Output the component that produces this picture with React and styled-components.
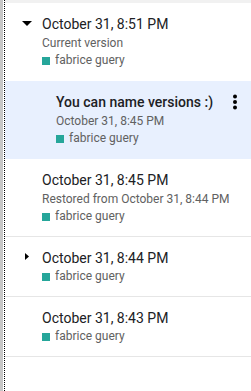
import React from 'react';
import styled, { createGlobalStyle } from 'styled-components';

const GlobalStyles = createGlobalStyle`
  html, body {
    margin: 0;
    padding: 0;
    background: #fff;
    font-family: Roboto, "Liberation Sans", Arial, sans-serif;
  }
`;

const Frame = styled.div`
  display: flex;
  height: 391px;
  border-left: 3px solid #c6c6c6;
  padding-left: 1px;
  box-sizing: border-box;
`;

const Panel = styled.div`
  flex: 1;
  border-left: 1px dotted #000;
  display: flex;
  flex-direction: column;
`;

const TopStrip = styled.div`
  height: 3px;
  background: #f1f1f1;
`;

const Item = styled.div`
  display: flex;
  align-items: flex-start;
  padding: 11px 4px 11px ${p => 10 + p.$level * 14}px;
  background: ${p => (p.$selected ? '#e8f0fe' : '#fff')};
  border-bottom: 1px solid ${p => (p.$divider ? '#e6e6e6' : 'transparent')};
`;

const Toggle = styled.div`
  width: 24px;
  height: 20px;
  flex: none;
  margin-right: 3px;
`;

const Body = styled.div`
  flex: 1;
  min-width: 0;
`;

const Title = styled.div`
  font-size: 14px;
  line-height: 20px;
  color: #202124;
  font-weight: ${p => (p.$named ? 500 : 400)};
  white-space: nowrap;
`;

const Sub = styled.div`
  font-size: 12px;
  line-height: 18px;
  color: #616161;
  white-space: nowrap;
`;

const Author = styled.div`
  display: flex;
  align-items: center;
  gap: 5px;
  font-size: 12px;
  line-height: 17px;
  color: #616161;
`;

const Swatch = styled.span`
  width: 8px;
  height: 8px;
  background: #26a69a;
`;

const MoreButton = styled.button`
  width: 24px;
  height: 24px;
  margin-top: -2px;
  padding: 0;
  border: 0;
  background: transparent;
  flex: none;
`;

const Arrow = ({ dir }) => (
  <svg width="24" height="20" viewBox="0 0 24 20">
    {dir === 'down' && <polygon points="7,7 17,7 12,12" fill="#000" />}
    {dir === 'right' && <polygon points="10,5 14,8.5 10,12" fill="#000" />}
  </svg>
);

const MoreIcon = () => (
  <svg width="24" height="24" viewBox="0 0 24 24">
    <circle cx="12" cy="6.5" r="2" fill="#000" />
    <circle cx="12" cy="12" r="2" fill="#000" />
    <circle cx="12" cy="17.5" r="2" fill="#000" />
  </svg>
);

const versions = [
  { title: 'October 31, 8:51 PM', sub: 'Current version', arrow: 'down', level: 0 },
  { title: 'You can name versions :)', sub: 'October 31, 8:45 PM', level: 1, selected: true, named: true },
  { title: 'October 31, 8:45 PM', sub: 'Restored from October 31, 8:44 PM', level: 0, divider: true },
  { title: 'October 31, 8:44 PM', arrow: 'right', level: 0, divider: true },
  { title: 'October 31, 8:43 PM', level: 0, divider: true },
];

const VersionItem = ({ v }) => (
  <Item $level={v.level} $selected={v.selected} $divider={v.divider}>
    <Toggle>{v.arrow && <Arrow dir={v.arrow} />}</Toggle>
    <Body>
      <Title $named={v.named}>{v.title}</Title>
      {v.sub && <Sub>{v.sub}</Sub>}
      <Author>
        <Swatch />
        fabrice guery
      </Author>
    </Body>
    {v.selected && (
      <MoreButton>
        <MoreIcon />
      </MoreButton>
    )}
  </Item>
);

export default function App() {
  return (
    <>
      <GlobalStyles />
      <Frame>
        <Panel>
          <TopStrip />
          {versions.map((v, i) => (
            <VersionItem key={i} v={v} />
          ))}
        </Panel>
      </Frame>
    </>
  );
}
